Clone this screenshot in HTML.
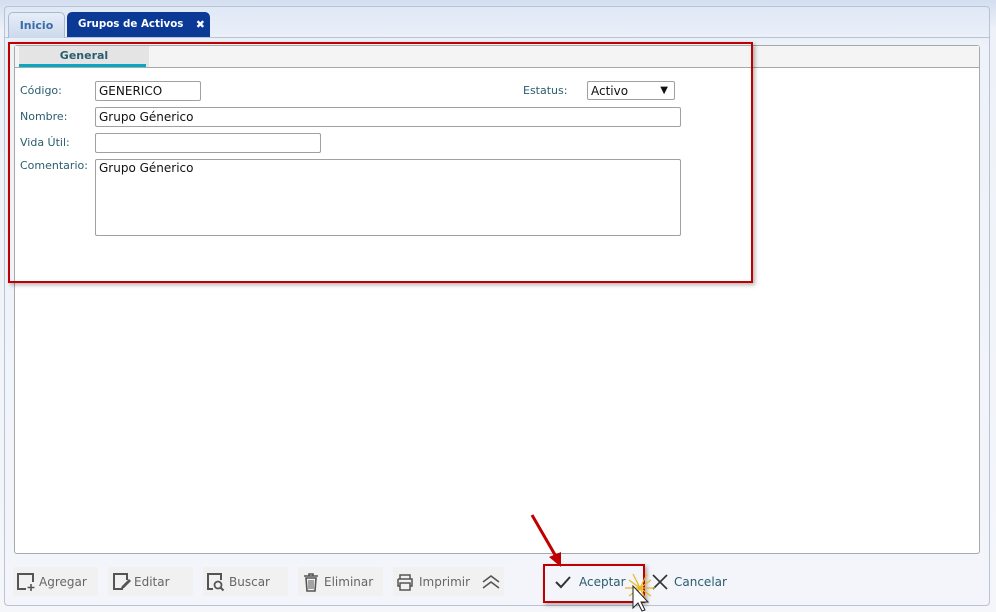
<!DOCTYPE html>
<html><head><meta charset="utf-8"><style>
body{margin:0;width:996px;height:612px;background:#fff;font-family:"DejaVu Sans","Liberation Sans",sans-serif;position:relative;overflow:hidden}
.a{position:absolute}
.outer{left:4px;top:6px;width:984px;height:598px;border:1px solid #b8c4d6;border-radius:4px;background:linear-gradient(#dfe8f6,#eef2f9 40px,#f3f5fa)}
.tab{top:12px;height:25px;border-radius:5px 5px 0 0;font-size:11px;font-weight:bold;line-height:25px;text-align:center}
.inner{left:14px;top:45px;width:964px;height:507px;border:1px solid #a8a8a8;border-radius:3px;background:#fff}
.lbl{font-size:11px;color:#2a5d6e}
.inp{border:1px solid #a0a0a0;border-radius:2px;background:#fff;font-size:12px;color:#111;padding-left:3px;box-sizing:border-box;line-height:18px}
.btn{top:567px;height:29px;background:#f1f1f1;border-radius:2px;font-size:12px;color:#666;line-height:31px}
</style></head><body>
<div class="a" style="left:0;top:0;width:996px;height:612px;background:linear-gradient(#d3def0,#eef2f8 30px,#f4f6fa)"></div>
<div class="a outer"></div>
<div class="a" style="left:5px;top:37px;width:984px;height:1px;background:#b8c4d6"></div>
<div class="a tab" style="left:8px;width:55px;background:linear-gradient(#e6eef8,#ccd9ec);border:1px solid #a8b8d0;border-bottom:none;color:#3a6aa8">Inicio</div>
<div class="a tab" style="left:67px;width:143px;background:#0a3a96;color:#fff;text-align:left;padding-left:11px;box-sizing:border-box;font-size:10.3px">Grupos de Activos<span style="position:absolute;right:5px;font-size:11px">✖</span></div>
<div class="a inner"></div>
<div class="a" style="left:15px;top:46px;width:964px;height:21px;background:#f4f4f4;border-bottom:1px solid #a8a8a8"></div>
<div class="a" style="left:19px;top:46px;width:130px;height:21px;background:#e4e4e4;font-size:11px;font-weight:bold;color:#2a5d6e;text-align:center;line-height:20px">General</div>
<div class="a" style="left:19px;top:64px;width:127px;height:3px;background:#0aa8c0"></div>

<div class="a lbl" style="left:20px;top:84px">Código:</div>
<div class="a inp" style="left:95px;top:81px;width:106px;height:20px">GENERICO</div>
<div class="a lbl" style="left:523px;top:84px">Estatus:</div>
<div class="a inp" style="left:587px;top:81px;width:88px;height:19px">Activo<span style="position:absolute;right:6px;font-size:10px">▼</span></div>
<div class="a lbl" style="left:20px;top:110px">Nombre:</div>
<div class="a inp" style="left:95px;top:107px;width:586px;height:20px">Grupo Génerico</div>
<div class="a lbl" style="left:20px;top:136px">Vida Útil:</div>
<div class="a inp" style="left:95px;top:133px;width:226px;height:20px"></div>
<div class="a lbl" style="left:20px;top:159px">Comentario:</div>
<div class="a inp" style="left:95px;top:159px;width:586px;height:77px;line-height:16px">Grupo Génerico</div>

<div class="a" style="left:8px;top:42px;width:741px;height:237px;border:2px solid #c00000;box-shadow:2px 2px 4px rgba(0,0,0,.3)"></div>

<div class="a btn" style="left:13px;width:85px"><svg class="a" style="left:3px;top:5px" width="20" height="20"><path d="M10 17H2V2h15v8" fill="none" stroke="#555" stroke-width="2"/><path d="M15 12v7M11.5 15.5h7" stroke="#555" stroke-width="1.6"/></svg><span class="a" style="left:26px">Agregar</span></div>
<div class="a btn" style="left:108px;width:85px"><svg class="a" style="left:3px;top:5px" width="20" height="20"><path d="M12 17H3V2h13v6" fill="none" stroke="#555" stroke-width="2"/><path d="M9 18l2-4 7-7 2 2-7 7z" fill="#555"/></svg><span class="a" style="left:26px">Editar</span></div>
<div class="a btn" style="left:203px;width:85px"><svg class="a" style="left:3px;top:5px" width="20" height="20"><path d="M7 17H2V2h13v6" fill="none" stroke="#555" stroke-width="2"/><circle cx="12" cy="13" r="3.5" fill="none" stroke="#555" stroke-width="1.8"/><path d="M14.5 15.5l3 3" stroke="#555" stroke-width="2"/></svg><span class="a" style="left:26px">Buscar</span></div>
<div class="a btn" style="left:298px;width:85px"><svg class="a" style="left:3px;top:5px" width="20" height="20"><path d="M3 4h14M8 4V2h4v2M5 6h10l-1 13H6z" fill="none" stroke="#555" stroke-width="1.6"/><path d="M8 8v9M10 8v9M12 8v9" stroke="#555"/></svg><span class="a" style="left:26px">Eliminar</span></div>
<div class="a btn" style="left:393px;width:85px"><svg class="a" style="left:2px;top:5px" width="20" height="20"><path d="M5 7V3h10v4M3 7h14v7h-2M5 14H3V7M5 11h10v7H5z" fill="none" stroke="#555" stroke-width="1.5"/></svg><span class="a" style="left:26px">Imprimir</span></div>
<div class="a btn" style="left:478px;width:26px"><svg class="a" style="left:3px;top:6px" width="20" height="18"><path d="M2 9l8-6 8 6M2 15l8-6 8 6" fill="none" stroke="#555" stroke-width="1.6"/></svg></div>

<svg class="a" style="left:553px;top:573px" width="20" height="18"><path d="M3 9l5 5 9-10" fill="none" stroke="#333" stroke-width="2"/></svg>
<div class="a" style="left:579px;top:575px;font-size:12px;color:#2a5d6e">Aceptar</div>
<svg class="a" style="left:652px;top:574px" width="16" height="16"><path d="M1 1l14 14M15 1L1 15" stroke="#333" stroke-width="1.6"/></svg>
<div class="a" style="left:674px;top:575px;font-size:12px;color:#2a5d6e">Cancelar</div>
<div class="a" style="left:543px;top:564px;width:98px;height:35px;border:2px solid #c00000;box-shadow:2px 2px 4px rgba(0,0,0,.3)"></div>
<svg class="a" style="left:525px;top:510px" width="130" height="102">
<path d="M7 5l26 45" stroke="#c00000" stroke-width="3"/><path d="M24 47l12 10 0-15z" fill="#c00000"/>
<g stroke="#e8b820" stroke-width="1.2"><path d="M108 64l14 28M122 64l-14 28M100 78h30M104 70l22 16M126 70l-22 16"/></g>
<path d="M108 76v22l5-5 4 8 3-1-4-8h7z" fill="#fff" stroke="#222"/>
</svg>
</body></html>
